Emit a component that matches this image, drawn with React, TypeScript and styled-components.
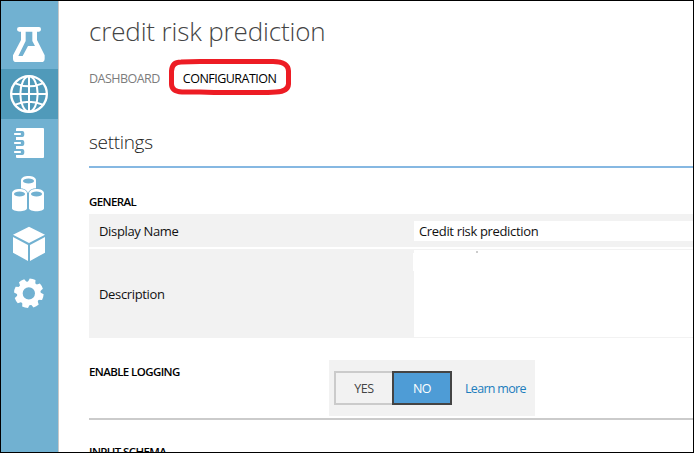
import React from "react";
import styled, { createGlobalStyle } from "styled-components";

const GlobalStyle = createGlobalStyle`
  * { box-sizing: border-box; }
  body { margin: 0; background: #fff; font-family: "Open Sans", "Noto Sans", sans-serif; }
`;

const Window = styled.div`
  display: flex;
  width: 694px;
  height: 453px;
  border: 1px solid #000;
  overflow: hidden;
  background: #fff;
`;

const Sidebar = styled.nav`
  flex: none;
  width: 58px;
  padding-top: 18px;
  background: #71b1d1;
  border-right: 1px solid #c8c8c8;
`;

const NavItem = styled.a<{ $active?: boolean }>`
  display: block;
  height: 50px;
  color: ${(p) => (p.$active ? "#509aba" : "#71b1d1")};
  background: currentColor;
`;

const NavIcon = styled.svg`
  display: block;
  width: 57px;
  height: 50px;
  fill: #fff;
`;

const Main = styled.main`
  flex: 1;
  min-width: 0;
  padding-left: 30px;
`;

const Title = styled.h1`
  margin: 0;
  padding-top: 10px;
  font-size: 26px;
  line-height: 40px;
  font-weight: 300;
  letter-spacing: -0.15px;
  color: #444;
  white-space: nowrap;
`;

const Tabs = styled.div`
  display: flex;
  gap: 23px;
  margin-top: 18px;
  font-size: 12.5px;
  line-height: 20px;
  letter-spacing: -0.52px;
`;

const Tab = styled.a<{ $active?: boolean }>`
  position: relative;
  color: ${(p) => (p.$active ? "#000" : "#7c7c7c")};
`;

const Highlight = styled.svg`
  position: absolute;
  left: -15px;
  top: -11px;
  width: 124px;
  height: 38px;
  fill: none;
  stroke: #ed1c24;
  stroke-width: 5px;
`;

const SectionTitle = styled.h2`
  margin: 0;
  padding: 40px 0 11px;
  border-bottom: 2px solid #86b8e2;
  font-size: 19px;
  line-height: 26px;
  font-weight: 300;
  letter-spacing: -0.32px;
  color: #222;
`;

const GroupLabel = styled.h3`
  margin: 0;
  font-size: 11.5px;
  line-height: 16px;
  font-weight: 600;
  letter-spacing: -0.6px;
  color: #000;
  white-space: nowrap;
`;

const General = styled.section`
  display: flex;
  flex-direction: column;
  gap: 4px;
  padding-top: 26px;
`;

const Fields = styled.div`
  display: grid;
  grid-template-rows: 33px 89px;
  gap: 2px;
`;

const Field = styled.div<{ $inset: string }>`
  display: grid;
  grid-template-columns: 325px 1fr;
  padding: ${(p) => p.$inset};
  background: #f2f2f2;
  font-size: 13px;
  letter-spacing: -0.34px;
  color: #111;
`;

const FieldLabel = styled.label`
  align-self: center;
  padding-left: 10px;
  line-height: 18px;
`;

const FieldValue = styled.div`
  position: relative;
  padding-left: 5px;
  background: #fff;
  line-height: 20px;
`;

const Patch = styled.span`
  position: absolute;
  left: -1px;
  top: 3px;
  width: 1px;
  height: 18px;
  background: #fff;
`;

const Speck = styled.span`
  position: absolute;
  left: 62px;
  top: 1px;
  width: 2px;
  height: 2px;
  background: #ccc;
`;

const Logging = styled.section`
  display: grid;
  grid-template-columns: 240px 206px;
  height: 82px;
  padding: 22px 0 2px;
  border-bottom: 2px solid #cbcbcb;
`;

const LoggingLabel = styled(GroupLabel)`
  padding-top: 4px;
`;

const SwitchPanel = styled.div`
  display: flex;
  align-items: center;
  padding-left: 5px;
  background: #f2f2f2;
`;

const SwitchButton = styled.button<{ $on?: boolean }>`
  width: 60px;
  height: 34px;
  margin-left: ${(p) => (p.$on ? "-2px" : "0")};
  padding: 2px 0 0;
  border: 2px solid ${(p) => (p.$on ? "#444" : "#cbcbcb")};
  background: ${(p) => (p.$on ? "#4e9cd6" : "#f2f2f2")};
  color: ${(p) => (p.$on ? "#fff" : "#444")};
  font: 400 12.5px/18px "Open Sans", "Noto Sans", sans-serif;
  letter-spacing: -0.5px;
`;

const LearnMore = styled.a`
  margin-left: 13px;
  padding-top: 2px;
  color: #1c7dbd;
  font-size: 12.5px;
  line-height: 18px;
  letter-spacing: -0.7px;
`;

const Schema = styled.section`
  padding-top: 24px;
`;

const Flask = () => (
  <NavIcon viewBox="3 57 171 150">
    <path
      fillRule="evenodd"
      d="M58 81H117Q123 81 123 88T117 95H111V120L134 166V176Q134 186 124 186H49Q39 186 39 176V166L63 120V95H58Q51 95 51 88T58 81ZM77 95V123L55 168H68L84 138H105L97 123V95Z"
    />
  </NavIcon>
);

const Globe = () => (
  <NavIcon viewBox="3 207 171 150">
    <g fill="none" stroke="#fff" strokeWidth="6">
      <circle cx="87" cy="282" r="53.5" strokeWidth="7" />
      <ellipse cx="87" cy="282" rx="26" ry="53" />
      <path d="M87 228V336M33 282H141M46 250Q87 268 128 250M46 314Q87 297 128 314" />
    </g>
  </NavIcon>
);

const Notebook = () => (
  <NavIcon viewBox="3 27 171 150">
    <rect x="48" y="54" width="84" height="90" rx="3" />
    {[72, 99, 126].map((y) => (
      <g key={y}>
        <path d={`M42 ${y - 9}H67Q73 ${y - 9} 73 ${y}T67 ${y + 9}H42Z`} fill="currentColor" />
        <rect x="42" y={y - 3} width="21" height="6" rx="2" />
      </g>
    ))}
  </NavIcon>
);

const Cylinder = ({ x, y, h }: { x: number; y: number; h: number }) => (
  <>
    <path
      d={`M${x} ${y + 13}C${x} ${y - 4} ${x + 45} ${y - 4} ${x + 45} ${y + 13}V${y + h - 9}C${x + 45} ${y + h + 3} ${x} ${y + h + 3} ${x} ${y + h - 9}Z`}
      stroke="currentColor"
      strokeWidth="5"
      paintOrder="stroke"
    />
    <ellipse cx={x + 22.5} cy={y + 15} rx="16.5" ry="7.5" fill="currentColor" />
  </>
);

const Cylinders = () => (
  <NavIcon viewBox="3 177 171 150">
    <Cylinder x={63} y={198} h={50} />
    <Cylinder x={36} y={237} h={67} />
    <Cylinder x={87} y={237} h={67} />
  </NavIcon>
);

const Cube = () => (
  <NavIcon viewBox="3 12 171 150">
    <path d="M87 35L135 59L87 84L39 59ZM39 66L84 90V138L39 113ZM135 66L90 90V138L135 113Z" />
  </NavIcon>
);

const Gear = () => (
  <NavIcon viewBox="3 162 171 150">
    <circle cx="86.5" cy="235" r="27" fill="none" stroke="#fff" strokeWidth="17" />
    {[15, 60, 105, 150, 195, 240, 285, 330].map((angle) => (
      <path key={angle} d="M116 223L130 226Q132 235 130 244L116 247Z" transform={`rotate(${angle} 86.5 235)`} />
    ))}
  </NavIcon>
);

export default function App() {
  return (
    <>
      <GlobalStyle />
      <Window>
        <Sidebar>
          <NavItem><Flask /></NavItem>
          <NavItem $active><Globe /></NavItem>
          <NavItem><Notebook /></NavItem>
          <NavItem><Cylinders /></NavItem>
          <NavItem><Cube /></NavItem>
          <NavItem><Gear /></NavItem>
        </Sidebar>
        <Main>
          <Title>credit risk prediction</Title>
          <Tabs>
            <Tab>DASHBOARD</Tab>
            <Tab $active>
              CONFIGURATION
              <Highlight viewBox="0 0 124 38">
                <path d="M13 4L32 3.5H105Q120 3.5 120.5 13V26Q120 33.5 108 34L100 34.5H46L32 34H14Q3.500 33.5 3.5 26V13Q4 4 13 4Z" />
              </Highlight>
            </Tab>
          </Tabs>
          <SectionTitle>settings</SectionTitle>
          <General>
            <GroupLabel>GENERAL</GroupLabel>
            <Fields>
              <Field $inset="7px 0 6px">
                <FieldLabel>Display Name</FieldLabel>
                <FieldValue>Credit risk prediction</FieldValue>
              </Field>
              <Field $inset="1px 0">
                <FieldLabel>Description</FieldLabel>
                <FieldValue>
                  <Patch />
                  <Speck />
                </FieldValue>
              </Field>
            </Fields>
          </General>
          <Logging>
            <LoggingLabel>ENABLE LOGGING</LoggingLabel>
            <SwitchPanel>
              <SwitchButton>YES</SwitchButton>
              <SwitchButton $on>NO</SwitchButton>
              <LearnMore>Learn more</LearnMore>
            </SwitchPanel>
          </Logging>
          <Schema>
            <GroupLabel>INPUT SCHEMA</GroupLabel>
          </Schema>
        </Main>
      </Window>
    </>
  );
}
